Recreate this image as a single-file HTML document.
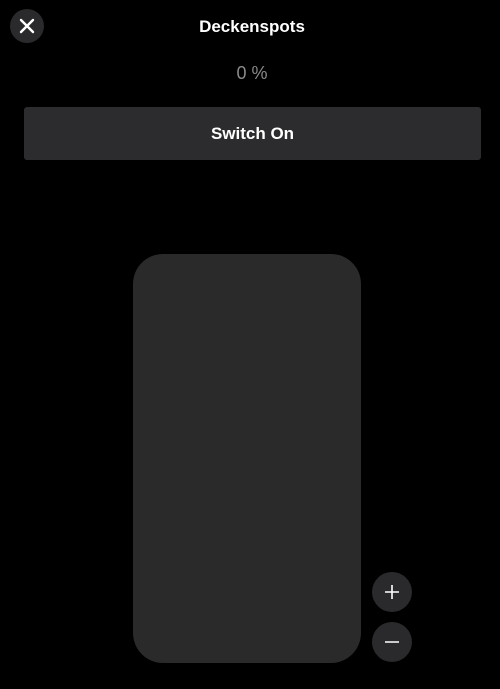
<!DOCTYPE html>
<html><head><style>
body{margin:0;width:500px;height:689px;background:#000;position:relative;overflow:hidden;font-family:"Liberation Sans",sans-serif;}
.c{position:absolute;border-radius:50%;background:#2a2a2c;}
</style></head><body>
<div class="c" style="left:10px;top:9px;width:34px;height:34px;"></div>
<svg style="position:absolute;left:10px;top:9px" width="34" height="34"><path d="M11 11L23 23M23 11L11 23" stroke="#fff" stroke-width="2.4" stroke-linecap="round"/></svg>
<div style="position:absolute;left:0;width:504px;top:17px;text-align:center;color:#fff;font-size:17px;font-weight:bold;">Deckenspots</div>
<div style="position:absolute;left:0;width:504px;top:63px;text-align:center;color:#8a8a8a;font-size:18px;">0 %</div>
<div style="position:absolute;left:24px;top:107px;width:457px;height:53px;background:#2c2c2e;border-radius:3px;color:#fff;font-size:17px;font-weight:bold;text-align:center;line-height:54px;">Switch On</div>
<div style="position:absolute;left:133px;top:254px;width:228px;height:409px;background:#2a2a2a;border-radius:30px;"></div>
<div class="c" style="left:372px;top:572px;width:40px;height:40px;"></div>
<div class="c" style="left:372px;top:622px;width:40px;height:40px;"></div>
<svg style="position:absolute;left:372px;top:572px" width="40" height="90"><path d="M13 20H27M20 13V27M13 70H27" stroke="#fff" stroke-width="1.6"/></svg>
</body></html>
